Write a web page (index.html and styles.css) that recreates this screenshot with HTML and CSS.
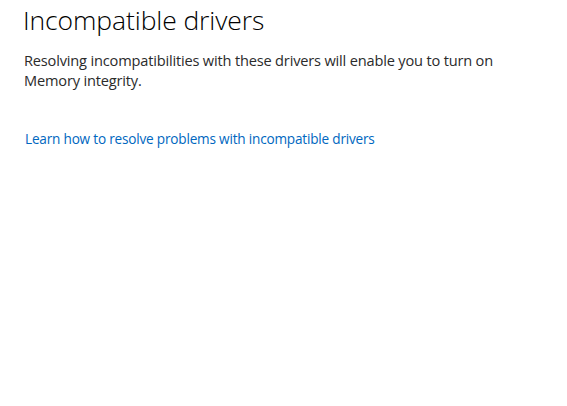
FILE: index.html
```html
<!DOCTYPE html>
<html>
<head>
<meta charset="utf-8">
<link rel="stylesheet" href="styles.css">
</head>
<body>
<div class="page">
  <h1 class="title">Incompatible drivers</h1>
  <p class="desc">Resolving incompatibilities with these drivers will enable you to turn on Memory integrity.</p>
  <a class="link" href="#">Learn how to resolve problems with incompatible drivers</a>
</div>
</body>
</html>
```
FILE: styles.css
```css
html, body {
  margin: 0;
  padding: 0;
  background: #ffffff;
}
.page {
  padding: 0 0 0 23px;
  font-family: "Open Sans", "Noto Sans", sans-serif;
  width: 490px;
}
.title {
  margin: 0;
  font-weight: 300;
  font-size: 26.5px;
  line-height: 40px;
  color: #000;
  letter-spacing: -0.1px;
}
.desc {
  margin: 10px 0 0 1px;
  font-size: 14.6px;
  line-height: 20px;
  color: #2b2b2b;
  letter-spacing: -0.18px;
}
.link {
  display: inline-block;
  margin: 39px 0 0 2px;
  font-size: 13.6px;
  line-height: 20px;
  color: #0067c0;
  text-decoration: none;
  letter-spacing: -0.2px;
}
```
